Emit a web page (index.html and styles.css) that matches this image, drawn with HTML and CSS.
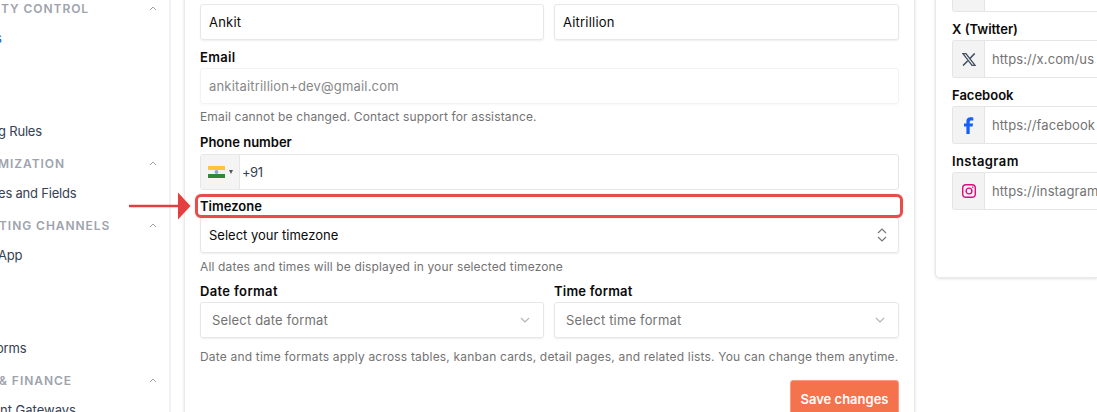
FILE: index.html
```
<!DOCTYPE html>
<html lang="en">
  <head>
    <meta charset="UTF-8" />
    <title>Profile settings</title>
    <link rel="stylesheet" href="styles.css">
  </head>
  <body>
    <nav class="sidebar">
      <div class="nav-heading"><span class="security">TY CONTROL</span>
        <svg class="caret" viewBox="0 0 8 5"><path d="M1 4l3-3 3 3" /></svg>
      </div>
      <a class="nav-item active">s</a>
      <a class="nav-item"></a>
      <a class="nav-item"></a>
      <a class="nav-item rules">g Rules</a>
      <div class="nav-heading"><span class="custom">MIZATION</span>
        <svg class="caret" viewBox="0 0 8 5"><path d="M1 4l3-3 3 3" /></svg>
      </div>
      <a class="nav-item fields">es and Fields</a>
      <div class="nav-heading"><span class="channels">TING CHANNELS</span>
        <svg class="caret" viewBox="0 0 8 5"><path d="M1 4l3-3 3 3" /></svg>
      </div>
      <a class="nav-item app">App</a>
      <a class="nav-item"></a>
      <a class="nav-item"></a>
      <a class="nav-item forms">orms</a>
      <div class="nav-heading"><span class="finance">&amp; FINANCE</span>
        <svg class="caret" viewBox="0 0 8 5"><path d="M1 4l3-3 3 3" /></svg>
      </div>
      <a class="nav-item gateways">nt Gateways</a>
    </nav>

    <main class="card profile">
      <div class="row names">
        <div class="input name">Ankit</div>
        <div class="input name">Aitrillion</div>
      </div>

      <div class="label email-label">Email</div>
      <div class="input disabled">ankitaitrillion+dev@gmail.com</div>
      <p class="help email-help">Email cannot be changed. Contact support for assistance.</p>

      <div class="label phone-label">Phone number</div>
      <div class="input phone">
        <div class="country">
          <svg class="flag" viewBox="0 0 17 12">
            <rect width="17" height="4" fill="#fbc43a" />
            <rect y="4" width="17" height="4" fill="#f3f3ee" />
            <rect y="8" width="17" height="4" fill="#2c8a34" />
            <circle cx="8.5" cy="6" r="1.9" fill="#8fa5d2" />
          </svg>
          <span class="arrow-down"></span>
        </div>
        <span class="dial">+91</span>
      </div>

      <div class="timezone">
        <div class="label timezone-label">Timezone</div>
        <div class="highlight"></div>
        <svg class="pointer" viewBox="0 0 62 28">
          <path d="M0 14h50" stroke="#e53e3e" stroke-width="2.6" />
          <path d="M49 0.5L61.5 14L49 27.5z" fill="#e53e3e" />
        </svg>
      </div>
      <div class="input select-timezone">
        <span>Select your timezone</span>
        <svg class="sort" viewBox="0 0 10 14"><path d="M1 5l4-4 4 4M1 9l4 4 4-4" /></svg>
      </div>
      <p class="help timezone-help">All dates and times will be displayed in your selected timezone</p>

      <div class="row formats">
        <div>
          <div class="label date-label">Date format</div>
          <div class="input select">
            <span>Select date format</span>
            <svg class="chevron" viewBox="0 0 10 6"><path d="M1 1l4 4 4-4" /></svg>
          </div>
        </div>
        <div>
          <div class="label time-label">Time format</div>
          <div class="input select">
            <span>Select time format</span>
            <svg class="chevron" viewBox="0 0 10 6"><path d="M1 1l4 4 4-4" /></svg>
          </div>
        </div>
      </div>
      <p class="help format-help">Date and time formats apply across tables, kanban cards, detail pages, and related lists. You can change them anytime.</p>

      <button class="save">Save changes</button>
    </main>

    <aside class="card social">
      <div class="social-input"><div class="social-icon"></div></div>

      <div class="label x-label">X (Twitter)</div>
      <div class="social-input">
        <div class="social-icon">
          <svg width="14" height="13" viewBox="0 0 14 13" fill="none" stroke="#42505f">
            <path d="M0.9 0.6h3l9.2 11.8h-3z" stroke-width="1.3" />
            <path d="M12.7 0.4L7.7 5.8M5.8 7.7L1 12.6" stroke-width="1.5" />
          </svg>
        </div>
        <span>https://x.com/us</span>
      </div>

      <div class="label facebook-label">Facebook</div>
      <div class="social-input">
        <div class="social-icon">
          <svg width="10" height="17" viewBox="0 0 10 17" fill="#1560fa">
            <path d="M2.4 17V9.5H0V6.4h2.4V4.3C2.4 1.5 4 0.3 6.4 0.3c1.2 0 2.4 0.2 2.9 0.3v2.8H7.7c-1.5 0-2 0.7-2 1.6v1.4h3.4l-0.5 3.1H5.7V17z" />
          </svg>
        </div>
        <span>https://facebook</span>
      </div>

      <div class="label instagram-label">Instagram</div>
      <div class="social-input">
        <div class="social-icon">
          <svg width="14" height="14" viewBox="0 0 14 14" fill="none" stroke="#e4087f" stroke-width="1.4">
            <rect x="0.7" y="0.7" width="12.6" height="12.6" rx="3.4" />
            <circle cx="7" cy="7" r="2.9" />
            <circle cx="10.7" cy="3.3" r="0.8" fill="#e4087f" stroke="none" />
          </svg>
        </div>
        <span>https://instagram</span>
      </div>
    </aside>
  </body>
</html>
```
FILE: styles.css
```
* {
  box-sizing: border-box;
}

body {
  margin: 0;
  height: 412px;
  overflow: hidden;
  display: flex;
  align-items: flex-start;
  background-color: #fff;
  color: #0a0a0a;
  font-family: Inter, "Open Sans", sans-serif;
  font-size: 13px;
}

.sidebar {
  width: 171px;
  height: 420px;
  flex: none;
  margin-top: -8px;
  overflow: hidden;
  border-right: 2px solid #f1f1f8;
}

.nav-heading,
.nav-item {
  display: flex;
  align-items: center;
  height: 31px;
  white-space: nowrap;
}

.nav-heading {
  justify-content: space-between;
  padding: 2px 12px 0 0;
  color: #9ea3ad;
  font-size: 12px;
  font-weight: 600;
  letter-spacing: 0.95px;
}

.nav-item {
  padding-bottom: 2px;
  color: #364153;
  letter-spacing: -0.2px;
}

.nav-item.active {
  color: #1760c4;
  margin-left: -5px;
}

.security {
  margin-left: 1px;
}

.custom,
.rules,
.fields,
.app {
  margin-left: -2px;
}

.channels,
.finance {
  margin-left: -1px;
}

.forms {
  margin-left: -4px;
}

.gateways {
  letter-spacing: 0;
}

.caret {
  width: 8px;
  height: 5px;
  fill: none;
  stroke: #9ea3ad;
}

.card {
  background-color: #fff;
  border: 1px solid #e9e9e9;
  box-shadow: 0 1px 3px rgba(0, 0, 0, 0.12);
}

.profile {
  width: 731px;
  height: 440px;
  flex: none;
  margin: -10px 0 0 13px;
  padding: 13px 15px 0;
}

.row {
  display: grid;
  grid-template-columns: 344px 345px;
  gap: 10px;
}

.label {
  height: 16px;
  line-height: 16px;
  font-weight: 600;
}

.input {
  display: flex;
  align-items: center;
  height: 36px;
  padding: 0 8px;
  border: 1px solid #e7e7e7;
  border-radius: 3px;
  box-shadow: 0 1px 2px rgba(0, 0, 0, 0.07);
}

.name {
  letter-spacing: 0.2px;
}

.disabled {
  color: #888;
  letter-spacing: 0.18px;
  border-color: #f2f2f2;
  box-shadow: 0 1px 2px rgba(0, 0, 0, 0.03);
}

.help {
  margin: 0;
  height: 14px;
  line-height: 14px;
  color: #737373;
  font-size: 12px;
  letter-spacing: 0.15px;
  white-space: nowrap;
}

.email-label {
  margin: 9px 0 3px;
  letter-spacing: 0.3px;
}

.email-help {
  margin-top: 6px;
}

.phone-label {
  margin: 10px 0 4px;
}

.phone {
  padding: 0;
  color: #364153;
  box-shadow: none;
}

.country {
  display: flex;
  align-items: center;
  gap: 4px;
  width: 39px;
  height: 100%;
  padding-left: 7px;
  background-color: #f4f4f4;
  border-right: 1px solid #e7e7e7;
}

.flag {
  width: 17px;
  height: 12px;
}

.arrow-down {
  border: 2.5px solid transparent;
  border-top: 4px solid #555;
  border-bottom: 0;
}

.dial {
  margin-left: 2px;
  letter-spacing: -0.5px;
}

.timezone {
  position: relative;
  padding: 8px 0 3px;
}

/* callout drawn over the timezone label */
.highlight {
  position: absolute;
  top: 4px;
  left: -5px;
  width: 708px;
  height: 24px;
  border: 3px solid #e84c4c;
  border-radius: 6px;
  box-shadow: 0 0 1px #f29a9a;
}

.pointer {
  position: absolute;
  top: 2px;
  left: -71px;
  width: 62px;
  height: 28px;
}

.select-timezone,
.select {
  justify-content: space-between;
}

.select-timezone {
  padding-right: 11px;
}

.sort {
  width: 10px;
  height: 14px;
  fill: none;
  stroke: #777;
  stroke-width: 1.2;
}

.timezone-help {
  margin: 7px 0 9px;
}

.date-label,
.time-label {
  margin-bottom: 3px;
}

.date-label {
  letter-spacing: 0.35px;
}

.time-label {
  letter-spacing: 0.2px;
}

.select {
  padding: 0 13px 0 11px;
  color: #737373;
  letter-spacing: 0.17px;
}

.chevron {
  width: 10px;
  height: 6px;
  fill: none;
  stroke: #b5b5b5;
  stroke-width: 1.2;
}

.format-help {
  margin: 12px 0 16px;
  letter-spacing: 0.19px;
}

.save {
  display: block;
  width: 109px;
  height: 37px;
  margin-left: auto;
  padding: 0;
  background-color: #f4734d;
  border: 1px solid #f79a7d;
  border-radius: 3px;
  color: #fff;
  font-family: inherit;
  font-size: 13px;
  font-weight: 600;
}

.social {
  flex: 1;
  min-width: 0;
  height: 298px;
  margin: -20px 0 0 20px;
  padding-left: 16px;
  border-right: 0;
  border-radius: 5px 0 0 5px;
}

.social-input {
  display: flex;
  align-items: center;
  height: 38px;
  overflow: hidden;
  border: 1px solid #e5e5e5;
  border-right: 0;
  border-radius: 3px 0 0 3px;
  color: #737373;
  letter-spacing: 0.1px;
}

.social > .social-input:first-child {
  margin-top: -7px;
}

.social-input span {
  margin-left: 7px;
}

.social-icon {
  display: flex;
  align-items: center;
  justify-content: center;
  width: 32px;
  height: 100%;
  flex: none;
  background-color: #f3f3f3;
  border-right: 1px solid #e5e5e5;
}

.x-label,
.facebook-label,
.instagram-label {
  margin: 9px 0 3px;
}

.instagram-label {
  letter-spacing: 0.4px;
}
```
